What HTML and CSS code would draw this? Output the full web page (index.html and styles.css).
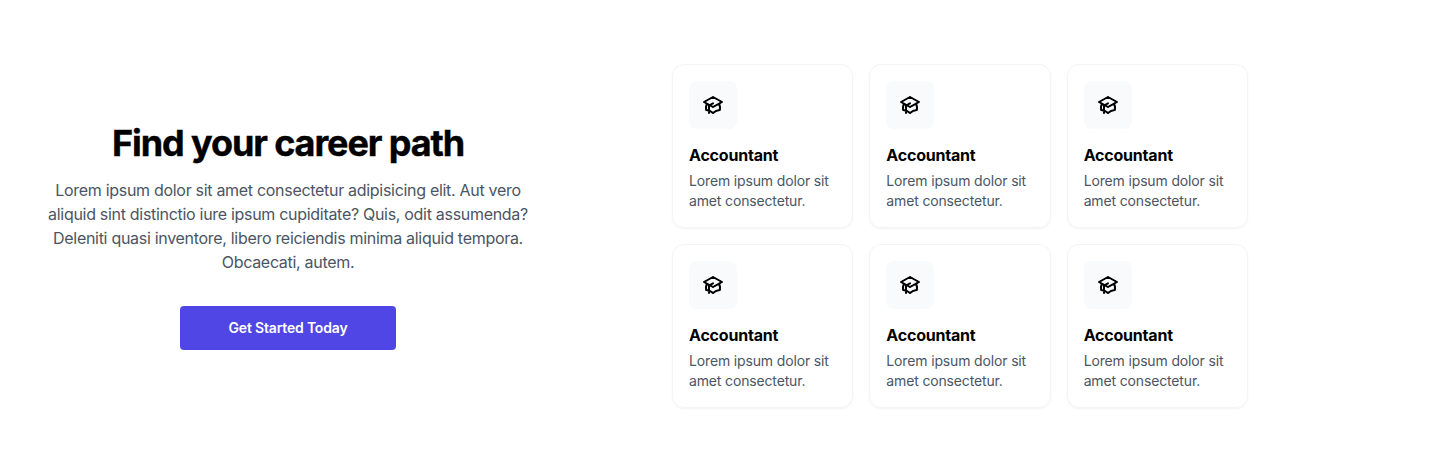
FILE: index.html
```html
<!DOCTYPE html>
<html lang="en">
<head>
<meta charset="utf-8">
<title>Find your career path</title>
<link rel="stylesheet" href="styles.css">
</head>
<body>
<svg class="sprite" aria-hidden="true">
  <symbol id="cap" viewBox="0 0 24 24">
    <path d="M12 14l9-5-9-5-9 5 9 5z"/>
    <path d="M12 14l6.16-3.422a12.083 12.083 0 01.665 6.479A11.952 11.952 0 0012 20.055a11.952 11.952 0 00-6.824-2.998 12.078 12.078 0 01.665-6.479L12 14z"/>
    <path stroke-linecap="round" stroke-linejoin="round" stroke-width="2" d="M12 14l9-5-9-5-9 5 9 5zm0 0l6.16-3.422a12.083 12.083 0 01.665 6.479A11.952 11.952 0 0012 20.055a11.952 11.952 0 00-6.824-2.998 12.078 12.078 0 01.665-6.479L12 14zm-4 6v-7.5l4-2.222"/>
  </symbol>
</svg>
<section class="section">
  <div class="intro">
    <h2 class="title">Find your career path</h2>
    <p class="lead">Lorem ipsum dolor sit amet consectetur adipisicing elit. Aut vero<br>aliquid sint distinctio iure ipsum cupiditate? Quis, odit assumenda?<br>Deleniti quasi inventore, libero reiciendis minima aliquid tempora.<br>Obcaecati, autem.</p>
    <a class="button" href="#">Get Started Today</a>
  </div>
  <div class="grid">
    <a class="card" href="#"><span class="icon"><svg><use href="#cap"/></svg></span><h3 class="name">Accountant</h3><p class="text">Lorem ipsum dolor sit<br>amet consectetur.</p></a>
    <a class="card" href="#"><span class="icon"><svg><use href="#cap"/></svg></span><h3 class="name">Accountant</h3><p class="text">Lorem ipsum dolor sit<br>amet consectetur.</p></a>
    <a class="card" href="#"><span class="icon"><svg><use href="#cap"/></svg></span><h3 class="name">Accountant</h3><p class="text">Lorem ipsum dolor sit<br>amet consectetur.</p></a>
    <a class="card" href="#"><span class="icon"><svg><use href="#cap"/></svg></span><h3 class="name">Accountant</h3><p class="text">Lorem ipsum dolor sit<br>amet consectetur.</p></a>
    <a class="card" href="#"><span class="icon"><svg><use href="#cap"/></svg></span><h3 class="name">Accountant</h3><p class="text">Lorem ipsum dolor sit<br>amet consectetur.</p></a>
    <a class="card" href="#"><span class="icon"><svg><use href="#cap"/></svg></span><h3 class="name">Accountant</h3><p class="text">Lorem ipsum dolor sit<br>amet consectetur.</p></a>
  </div>
</section>
</body>
</html>
```

FILE: styles.css
```css
* { box-sizing: border-box; margin: 0; padding: 0; }
body { background: #fff; color: #000; font-family: Inter, sans-serif; font-size: 16px; line-height: 24px; }
a { color: inherit; text-decoration: none; }
.sprite { display: none; }
.section { display: grid; grid-template-columns: 576px 576px; column-gap: 64px; align-items: center; padding: 64px 32px; width: 1440px; }
.intro { width: 512px; text-align: center; white-space: nowrap; }
.title { padding-top: 2px; font-size: 36px; line-height: 38px; font-weight: 700; letter-spacing: -1.1px; -webkit-text-stroke: 0.4px #000; }
.lead { margin-top: 16px; color: #4b5563; letter-spacing: -0.3px; }
.button { display: inline-block; margin-top: 32px; padding: 12px 48px; width: 216px; background: #4f46e5; color: #fff; border-radius: 4px; font-size: 14px; line-height: 20px; font-weight: 600; letter-spacing: -0.18px; }
.grid { display: grid; grid-template-columns: repeat(3, 1fr); gap: 16px; }
.card { display: block; height: 164px; padding: 16px; border: 1px solid #f3f4f6; border-radius: 12px; box-shadow: 0 1px 2px rgba(0, 0, 0, 0.05); white-space: nowrap; }
.icon { display: flex; align-items: center; justify-content: center; width: 48px; height: 48px; background: #f9fafb; border-radius: 8px; }
.icon svg { width: 24px; height: 24px; fill: none; stroke: #000; }
.name { margin-top: 14px; font-size: 16px; line-height: 24px; font-weight: 700; letter-spacing: -0.2px; }
.text { margin-top: 4px; color: #4b5563; font-size: 14px; line-height: 20px; letter-spacing: -0.15px; }
```
